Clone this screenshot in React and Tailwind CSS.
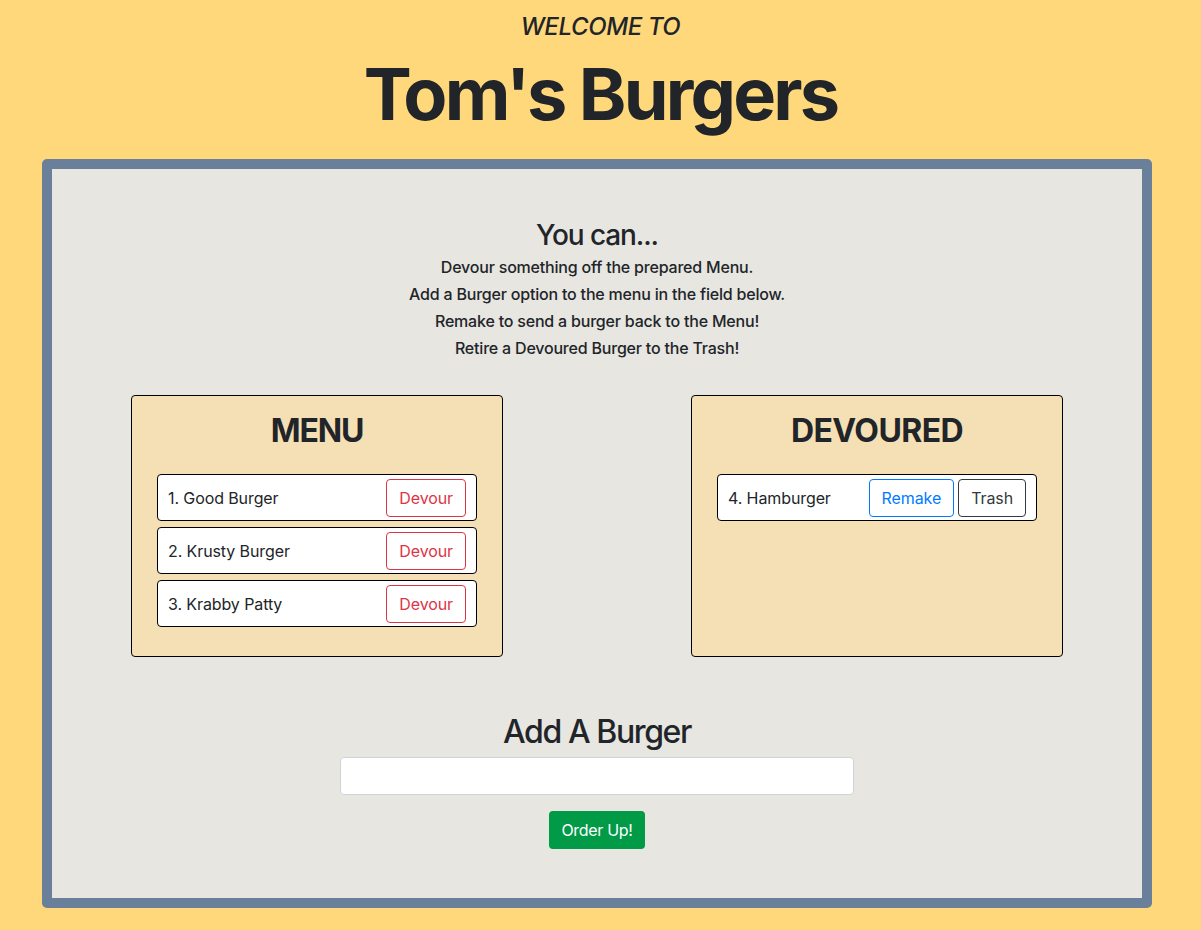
import React from "react";

const font = { fontFamily: "Inter, 'Noto Sans', 'Liberation Sans', sans-serif" };

function Item({ label, children }) {
  return (
    <div className="flex items-center justify-between border border-black rounded-[4px] bg-white pl-[10px] pr-[10px] pt-[4px] pb-[3px]">
      <span className="text-[16px] leading-[24px] text-[#212529] tracking-[-0.1px]">{label}</span>
      <div className="flex gap-[4px]">{children}</div>
    </div>
  );
}

function Btn({ children, cls }) {
  return (
    <button className={"h-[38px] px-[12px] border rounded-[4px] text-[16px] leading-[24px] bg-white tracking-[-0.1px] " + cls}>
      {children}
    </button>
  );
}

export default function App() {
  return (
    <div className="min-h-[930px] bg-[#ffd87b] text-[#212529]" style={font}>
      <div className="flex flex-col items-center pt-[13px]">
        <h2 className="text-[24px] leading-[1.2] italic font-medium tracking-[-0.4px]">WELCOME TO</h2>
        <h1 className="mt-[9px] text-[72px] leading-[1.2] font-bold tracking-[-2.8px]">Tom's Burgers</h1>
      </div>
      <div className="mt-[22px] ml-[42px] w-[1110px] h-[749px] border-[10px] border-[#6a7f9a] rounded-[5px] bg-[#e8e6e1] flex flex-col items-center pt-[50px]">
        <h3 className="text-[28px] leading-[1.2] font-medium mb-[5px] tracking-[-1.1px]">You can...</h3>
        {[
          "Devour something off the prepared Menu.",
          "Add a Burger option to the menu in the field below.",
          "Remake to send a burger back to the Menu!",
          "Retire a Devoured Burger to the Trash!",
        ].map((t) => (
          <h6 key={t} className="text-[16px] leading-[1.2] font-medium mb-[8px] tracking-[-0.2px]">{t}</h6>
        ))}
        <div className="mt-[28px] flex gap-[188px] items-stretch">
          <div className="w-[372px] bg-[#f5e0b6] border border-black rounded-[4px] pt-[16px] pb-[29px] px-[25px]">
            <h2 className="text-[32px] leading-[1.2] font-bold text-center mb-[24px] tracking-[-1.2px]">MENU</h2>
            <div className="flex flex-col gap-[6px]">
              <Item label="1. Good Burger"><Btn cls="border-[#dc3545] text-[#dc3545]">Devour</Btn></Item>
              <Item label="2. Krusty Burger"><Btn cls="border-[#dc3545] text-[#dc3545]">Devour</Btn></Item>
              <Item label="3. Krabby Patty"><Btn cls="border-[#dc3545] text-[#dc3545]">Devour</Btn></Item>
            </div>
          </div>
          <div className="w-[372px] bg-[#f5e0b6] border border-black rounded-[4px] pt-[16px] pb-[29px] px-[25px]">
            <h2 className="text-[32px] leading-[1.2] font-bold text-center mb-[24px] tracking-[-0.6px]">DEVOURED</h2>
            <div className="flex flex-col gap-[6px]">
              <Item label="4. Hamburger">
                <Btn cls="border-[#007bff] text-[#007bff]">Remake</Btn>
                <Btn cls="border-[#343a40] text-[#343a40]">Trash</Btn>
              </Item>
            </div>
          </div>
        </div>
        <h2 className="mt-[56px] text-[32px] leading-[1.2] font-medium mb-[6px] tracking-[-1.4px]">Add A Burger</h2>
        <input className="w-[514px] h-[38px] bg-white border border-[#ced4da] rounded-[4px] px-[12px] outline-none" />
        <button className="mt-[16px] h-[38px] px-[12px] rounded-[4px] bg-[#019a47] text-white text-[16px] leading-[24px] tracking-[-0.3px]">Order Up!</button>
      </div>
    </div>
  );
}
